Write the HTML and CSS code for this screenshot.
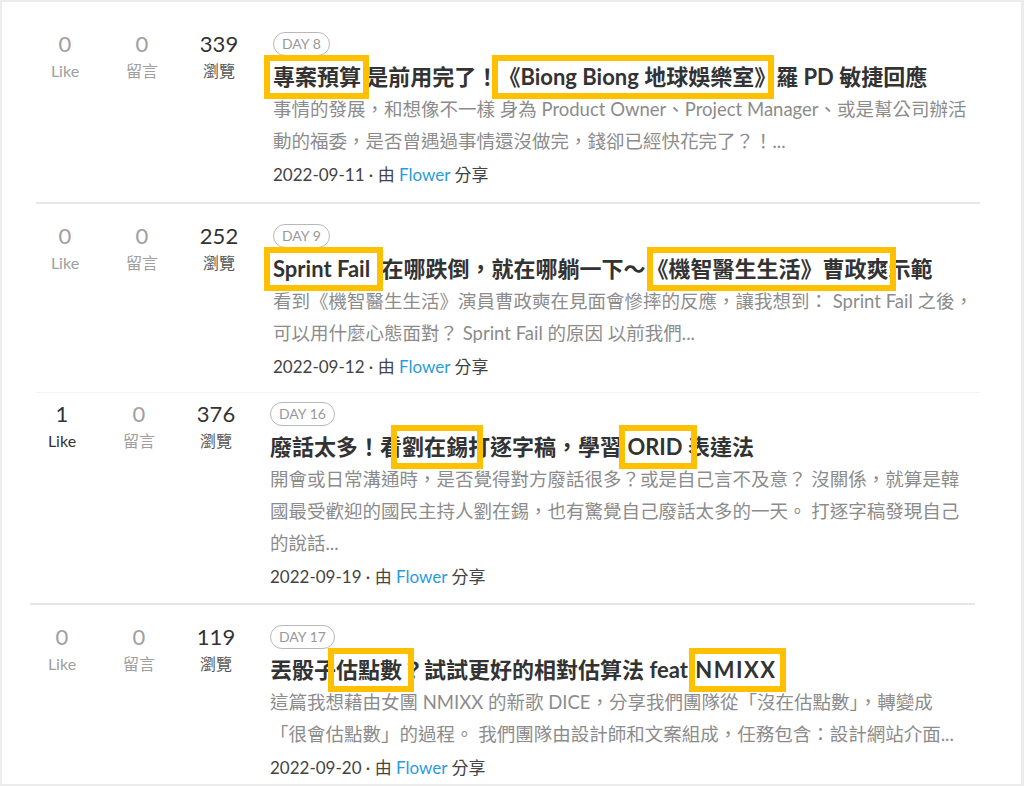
FILE: index.html
```
<!DOCTYPE html>
<html lang="zh-Hant">
<head>
    <meta charset="UTF-8">
    <meta name="viewport" content="width=device-width, initial-scale=1.0">
    <title>鐵人賽文章列表</title>
    <link rel="stylesheet" href="styles.css">
</head>
<body>
    <div class="panel">
        <ul class="articles">
            <li class="article">
                <div class="stats">
                    <div class="stat"><span class="stat-num">0</span><span class="stat-label">Like</span></div>
                    <div class="stat"><span class="stat-num">0</span><span class="stat-label">留言</span></div>
                    <div class="stat stat--views"><span class="stat-num">339</span><span class="stat-label">瀏覽</span></div>
                </div>
                <div class="article-body">
                    <span class="day">DAY 8</span>
                    <h3 class="article-title"><span class="mark mark--a">專案預算</span> 是前用完了！<span class="mark mark--b">《Biong Biong 地球娛樂室》</span>羅 PD 敏捷回應</h3>
                    <p class="article-desc">事情的發展，和想像不一樣 身為 Product Owner、Project Manager、或是幫公司辦活<br>動的福委，是否曾遇過事情還沒做完，錢卻已經快花完了？！...</p>
                    <div class="article-meta">2022-09-11 · 由 <a href="#">Flower</a> 分享</div>
                </div>
            </li>
            <li class="article article--seam">
                <div class="stats">
                    <div class="stat"><span class="stat-num">0</span><span class="stat-label">Like</span></div>
                    <div class="stat"><span class="stat-num">0</span><span class="stat-label">留言</span></div>
                    <div class="stat stat--views"><span class="stat-num">252</span><span class="stat-label">瀏覽</span></div>
                </div>
                <div class="article-body">
                    <span class="day">DAY 9</span>
                    <h3 class="article-title"><span class="mark mark--c">Sprint Fail</span> 在哪跌倒，就在哪躺一下～<span class="mark mark--d">《機智醫生生活》曹政爽</span>示範</h3>
                    <p class="article-desc">看到《機智醫生生活》演員曹政奭在見面會慘摔的反應，讓我想到： Sprint Fail 之後，<br>可以用什麼心態面對？ Sprint Fail 的原因 以前我們...</p>
                    <div class="article-meta">2022-09-12 · 由 <a href="#">Flower</a> 分享</div>
                </div>
            </li>
            <li class="article article--shift article--tight">
                <div class="stats">
                    <div class="stat stat--active"><span class="stat-num">1</span><span class="stat-label">Like</span></div>
                    <div class="stat"><span class="stat-num">0</span><span class="stat-label">留言</span></div>
                    <div class="stat stat--views"><span class="stat-num">376</span><span class="stat-label">瀏覽</span></div>
                </div>
                <div class="article-body">
                    <span class="day">DAY 16</span>
                    <h3 class="article-title">廢話太多！看<span class="mark mark--e">劉在錫</span>打逐字稿，學習 <span class="mark mark--f">ORID</span> 表達法</h3>
                    <p class="article-desc">開會或日常溝通時，是否覺得對方廢話很多？或是自己言不及意？ 沒關係，就算是韓<br>國最受歡迎的國民主持人劉在錫，也有驚覺自己廢話太多的一天。 打逐字稿發現自己<br>的說話...</p>
                    <div class="article-meta">2022-09-19 · 由 <a href="#">Flower</a> 分享</div>
                </div>
            </li>
            <li class="article article--shift article--last">
                <div class="stats">
                    <div class="stat"><span class="stat-num">0</span><span class="stat-label">Like</span></div>
                    <div class="stat"><span class="stat-num">0</span><span class="stat-label">留言</span></div>
                    <div class="stat stat--views"><span class="stat-num">119</span><span class="stat-label">瀏覽</span></div>
                </div>
                <div class="article-body">
                    <span class="day">DAY 17</span>
                    <h3 class="article-title">丟骰子<span class="mark mark--g">估點數</span>？試試更好的相對估算法 feat <span class="mark mark--h">NMIXX</span></h3>
                    <p class="article-desc">這篇我想藉由女團 NMIXX 的新歌 DICE，分享我們團隊從「沒在估點數」，轉變成<br>「很會估點數」的過程。 我們團隊由設計師和文案組成，任務包含：設計網站介面...</p>
                    <div class="article-meta">2022-09-20 · 由 <a href="#">Flower</a> 分享</div>
                </div>
            </li>
        </ul>
    </div>
</body>
</html>
```

FILE: styles.css
```
/* Page frame */
body {
    margin: 0;
    background-color: #ececec;
    font-family: Lato, "Noto Sans CJK TC", sans-serif;
}

.panel {
    margin: 2px 3px 0 2px;
    height: 782px;
    background-color: #fff;
    overflow: hidden;
}

/* Article list */
.articles {
    list-style: none;
    margin: 0;
    padding: 0;
}

.article {
    display: flex;
    margin: 0 41px 0 34px;
    padding: 20px 0 11px;
    border-bottom: 2px solid #e6e6e6;
}

.article:first-child {
    padding-top: 30px;
}

.article--seam {
    padding-bottom: 9px;
    border-bottom: 1px solid #f3f3f3;
}

.article--shift {
    margin: 0 46px 0 28px;
    padding-left: 3px;
}

.article--tight {
    padding-top: 9px;
    padding-bottom: 10px;
}

.article--last {
    padding-top: 20px;
    border-bottom: none;
}

/* Like / comment / view counters */
.stats {
    display: flex;
    gap: 19px;
    flex-shrink: 0;
}

.stat {
    width: 58px;
    display: flex;
    flex-direction: column;
    align-items: center;
    color: #a0a0a0;
}

.stat-num {
    font-size: 22px;
    line-height: 24px;
}

.stat-label {
    margin-top: 4px;
    font-size: 16px;
    line-height: 22px;
}

.stat--active,
.stat--views {
    color: #333;
}

.stat--views .stat-label {
    color: #555;
}

/* Article text */
.article-body {
    display: flex;
    flex-direction: column;
    align-items: flex-start;
    margin-left: 25px;
}

.day {
    box-sizing: border-box;
    height: 24px;
    padding: 0 8px;
    border: 1px solid #b8b8b8;
    border-radius: 12px;
    color: #999;
    font-size: 14px;
    line-height: 22px;
}

.article-title {
    margin: 5px 0 0;
    color: #333;
    font-size: 22px;
    font-weight: 700;
    line-height: 32px;
    white-space: nowrap;
}

.article-desc {
    margin: 0;
    color: #8c8c8c;
    font-size: 18.5px;
    line-height: 32px;
    white-space: nowrap;
}

.article-meta {
    margin-top: 2px;
    color: #444;
    font-size: 17px;
    line-height: 32px;
}

.article-meta a {
    color: #2b9be0;
    text-decoration: none;
}

/* Yellow highlight boxes drawn over the titles */
.mark {
    position: relative;
    display: inline-block;
}

.mark::after {
    content: "";
    position: absolute;
    top: -6px;
    bottom: -6px;
    left: -9px;
    right: -8px;
    border: 6px solid #ffc000;
}

.mark--b::after { left: -6px; right: 2px; }
.mark--c { margin-right: 6px; }
.mark--c::after { left: -9px; right: -13px; }
.mark--d { margin-left: 1px; }
.mark--d::after { left: 1px; right: -7px; }
.mark--e::after { left: -11px; right: -15px; }
.mark--f::after { left: -8px; right: -14px; }
.mark--g::after { left: -8px; right: -12px; }
.mark--h { margin-left: 2px; letter-spacing: 1.5px; }
.mark--h::after { left: -6px; right: -9px; }
```
